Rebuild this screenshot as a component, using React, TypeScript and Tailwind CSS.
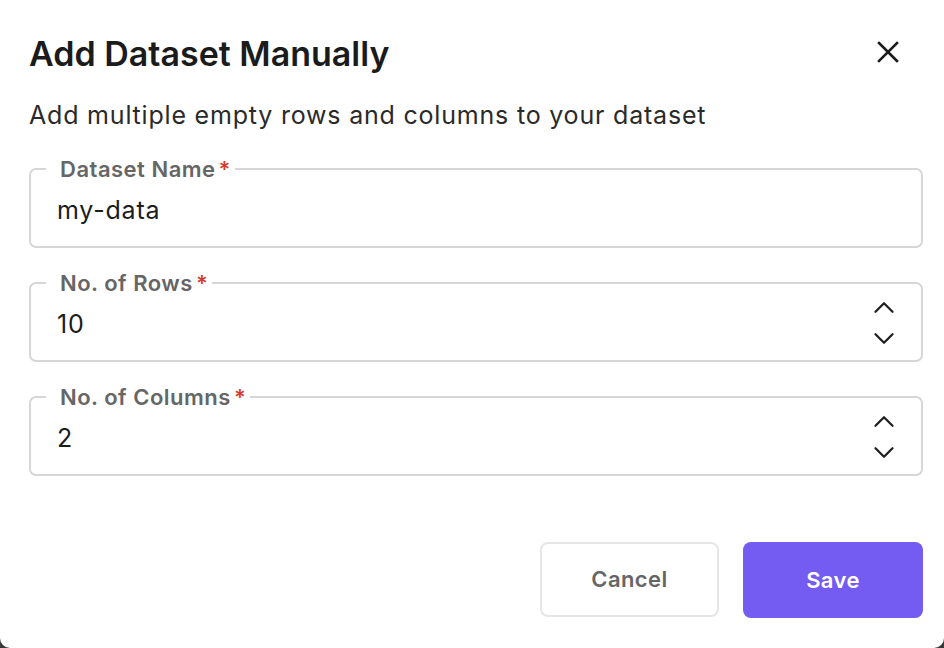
import React from "react";

const Chevron = ({ up }: { up?: boolean }) => (
  <svg width="20" height="11" viewBox="0 0 20 11" fill="none">
    <path
      d={up ? "M1.5 9.8 L10 1.2 L18.5 9.8" : "M1.5 1.2 L10 9.8 L18.5 1.2"}
      stroke="#1f1f1f"
      strokeWidth="2.2"
      strokeLinecap="round"
      strokeLinejoin="round"
    />
  </svg>
);

const Field = ({ label, value, spinner }: { label: string; value: string; spinner?: boolean }) => (
  <div className="relative h-[80px] rounded-[7px] border-2 border-[#d6d6d6] flex items-center pl-[26px] pr-[27px]">
    <div className="absolute -top-[14px] left-[15px] bg-white pl-[14px] pr-[4px] flex items-start text-[22px] leading-[26px] font-semibold text-[#666666] tracking-[0.5px]">
      <span>{label}</span>
      <span className="text-[#d23c2c] ml-[3px]">*</span>
    </div>
    <span className="flex-1 text-[25px] text-[#1c1c1c] mt-[5px] tracking-[0.8px]">{value}</span>
    {spinner && (
      <div className="flex flex-col gap-[20px] items-center mt-[1px]">
        <Chevron up />
        <Chevron />
      </div>
    )}
  </div>
);

export default function App() {
  return (
    <div className="w-[944px] h-[648px] bg-[#3a3a3a] overflow-hidden" style={{ fontFamily: "Inter, 'Noto Sans', sans-serif" }}>
      <div className="h-full bg-white rounded-b-[10px] pl-[29px] pr-[21px] pt-[33px]">
        <div className="flex items-center justify-between pr-[24px]">
          <h1 className="text-[34px] leading-[42px] font-semibold text-[#1b1b1b] tracking-[0px]">Add Dataset Manually</h1>
          <svg width="22" height="22" viewBox="0 0 22 22" className="-mt-[4px]">
            <path d="M2 2 L20 20 M20 2 L2 20" stroke="#1b1b1b" strokeWidth="2.6" strokeLinecap="square" />
          </svg>
        </div>
        <p className="mt-[25px] text-[25px] leading-[30px] text-[#2a2a2a] tracking-[0.8px]">Add multiple empty rows and columns to your dataset</p>
        <div className="mt-[38px] flex flex-col gap-[34px]">
          <Field label="Dataset Name" value="my-data" />
          <Field label="No. of Rows" value="10" spinner />
          <Field label="No. of Columns" value="2" spinner />
        </div>
        <div className="mt-[66px] flex justify-end gap-[24px]">
          <button className="w-[179px] h-[75px] rounded-[8px] border-2 border-[#e6e6e6] bg-white text-[22px] font-semibold text-[#666666] tracking-[0.4px]">Cancel</button>
          <button className="w-[180px] h-[76px] rounded-[8px] bg-[#745bf2] text-[22px] font-semibold text-white tracking-[0.4px]">Save</button>
        </div>
      </div>
    </div>
  );
}
